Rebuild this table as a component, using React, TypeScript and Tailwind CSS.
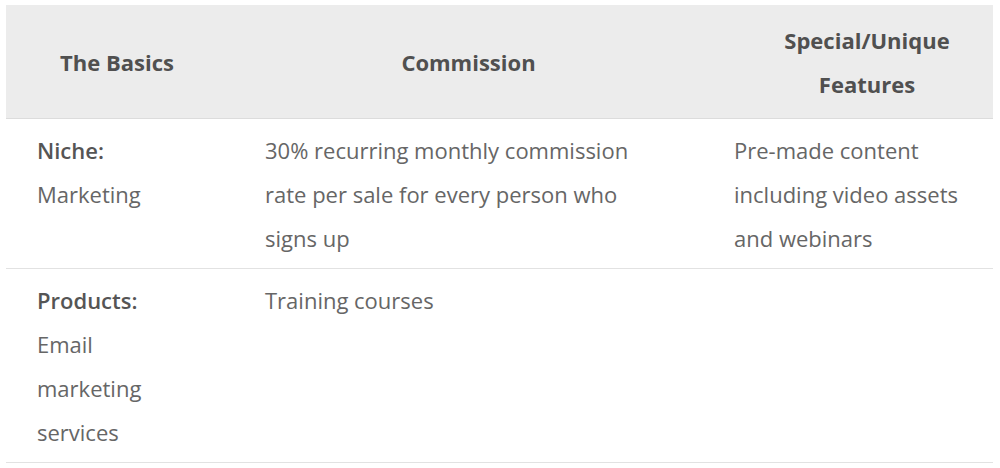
const rows = [
  {
    label: 'Niche:',
    value: ['Marketing'],
    commission: '30% recurring monthly commission rate per sale for every person who signs up',
    features: 'Pre-made content including video assets and webinars',
  },
  {
    label: 'Products:',
    value: ['Email', 'marketing', 'services'],
    commission: 'Training courses',
    features: '',
  },
];

export default function App() {
  return (
    <div className="min-h-[468px] bg-white pt-[5px] pl-[6px] pr-[7px] font-['Open_Sans',sans-serif] text-[22px] leading-[44px]">
      <div className="grid grid-cols-[228px_469px_290px] bg-[#ececec] border-b border-[#dcdcdc] font-bold text-[#505050]">
        <div className="flex items-center justify-center pt-[13px] pb-[12px] pr-[6px]">The Basics</div>
        <div className="flex items-center justify-center pt-[13px] pb-[12px]">Commission</div>
        <div className="flex items-center justify-center pt-[13px] pb-[12px] pl-[38px] text-center">
          Special/Unique
          <br />
          Features
        </div>
      </div>
      {rows.map((row) => (
        <div
          key={row.label}
          className="grid grid-cols-[228px_469px_290px] border-b border-[#e2e2e2] text-[#666]"
        >
          <div className="pl-[31px] pr-[10px] pt-[9px] pb-[8px]">
            <div className="font-semibold text-[#555]">{row.label}</div>
            {row.value.map((v) => (
              <div key={v}>{v}</div>
            ))}
          </div>
          <div className="pl-[31px] pr-[40px] pt-[9px] pb-[8px]">{row.commission}</div>
          <div className="pl-[31px] pr-[10px] pt-[9px] pb-[8px]">{row.features}</div>
        </div>
      ))}
    </div>
  );
}
